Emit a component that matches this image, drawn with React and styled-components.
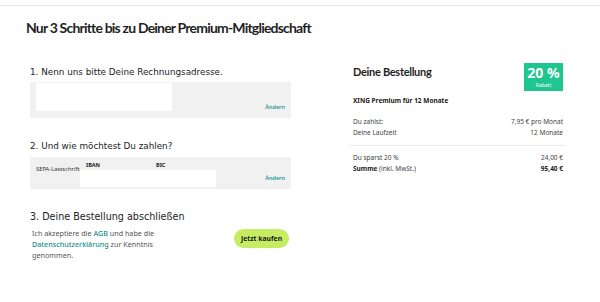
import React from 'react'
import styled, { createGlobalStyle } from 'styled-components'

const GlobalStyle = createGlobalStyle`
  body{
    margin:0;
    background:#fff;
    font-family:"Noto Sans","Open Sans",sans-serif;
    color:#2c2c2c;
  }
`

const TopBar = styled.div`
  height:5px;
  border-bottom:1px solid #e6e8ec;
`

const Page = styled.div`
  padding:13px 26px 0;
`

const Title = styled.h1`
  margin:0;
  font-family:Lato,sans-serif;
  font-size:14px;
  font-weight:700;
  letter-spacing:-0.8px;
  line-height:18px;
  color:#1f1f24;
`

const Columns = styled.div`
  display:grid;
  grid-template-columns:261px 216px;
  column-gap:59px;
  padding-left:4px;
  margin-top:28px;
`

const Left = styled.div`
  display:flex;
  flex-direction:column;
`

const StepTitle = styled.h2`
  margin:${p => p.$top || 0}px 0 0;
  font-family:"DejaVu Sans",sans-serif;
  font-size:${p => p.$size || 8.8}px;
  font-weight:400;
  line-height:14px;
  color:#222;
`

const GrayBox = styled.div`
  background:#f1f1f1;
  margin-top:${p => p.$top || 0}px;
  height:${p => p.$h}px;
  display:flex;
  position:relative;
`

const WhiteField = styled.div`
  background:#fff;
  width:136px;
  height:${p => p.$h}px;
`

const EditLink = styled.a`
  font-size:5.5px;
  color:#1a9a94;
  font-weight:600;
  position:absolute;
  right:6px;
  bottom:${p => p.$bottom}px;
`

const SepaLabel = styled.span`
  font-size:5.8px;
  color:#333;
  width:44px;
  padding:8px 0 0 6px;
`

const FieldGroup = styled.div`
  display:flex;
  flex-direction:column;
  align-self:flex-end;
`

const FieldLabels = styled.div`
  display:grid;
  grid-template-columns:70px 66px;
  padding-left:6px;
  font-size:5.5px;
  font-weight:700;
  color:#222;
  line-height:8px;
  margin-bottom:1px;
`

const Consent = styled.div`
  display:flex;
  justify-content:space-between;
  align-items:flex-start;
  margin-top:4px;
`

const ConsentText = styled.p`
  margin:0;
  padding-left:2px;
  font-size:7.2px;
  line-height:11px;
  color:#555;
  width:134px;
`

const TextLink = styled.a`
  color:#1a8f8a;
  text-decoration:none;
  font-weight:500;
`

const BuyButton = styled.button`
  margin-top:1px;
  margin-right:2px;
  width:55px;
  height:19px;
  border:none;
  border-radius:10px;
  background:#c6ec64;
  font-family:"Noto Sans",sans-serif;
  font-size:6.8px;
  font-weight:700;
  color:#1b1b1b;
`

const Right = styled.div`
  display:flex;
  flex-direction:column;
`

const OrderHead = styled.div`
  display:flex;
  justify-content:space-between;
  align-items:flex-start;
  padding:0 3px;
`

const OrderTitle = styled.h3`
  margin:0;
  font-family:Lato,sans-serif;
  font-size:11px;
  letter-spacing:-0.3px;
  font-weight:700;
  color:#1f1f24;
  line-height:13px;
`

const Badge = styled.div`
  width:39px;
  height:28px;
  margin-top:-2px;
  background:#1fc690;
  color:#fff;
  display:flex;
  flex-direction:column;
  align-items:center;
  justify-content:center;
`

const BadgeValue = styled.span`
  font-size:14px;
  font-weight:700;
  line-height:16px;
`

const BadgeLabel = styled.span`
  font-size:5px;
  line-height:8px;
`

const Product = styled.div`
  padding:0 3px;
  margin-top:5px;
  font-size:6.5px;
  font-weight:700;
  color:#222;
`

const Rows = styled.div`
  padding:${p => p.$pad};
  border-top:${p => (p.$line ? '1px solid #ececec' : 'none')};
  margin-top:${p => p.$top}px;
`

const Row = styled.div`
  display:flex;
  justify-content:space-between;
  padding:0 3px;
  font-size:6.5px;
  line-height:11px;
  color:#444;

  b{ color:#222; }
`

const App = () => {
  return (
    <>
      <GlobalStyle />
      <TopBar />
      <Page>
        <Title>Nur 3 Schritte bis zu Deiner Premium-Mitgliedschaft</Title>
        <Columns>
          <Left>
            <StepTitle>1. Nenn uns bitte Deine Rechnungsadresse.</StepTitle>
            <GrayBox $top={3} $h={36}>
              <div style={{ padding: '1px 0 0 6px' }}>
                <WhiteField $h={28} />
              </div>
              <EditLink $bottom={7}>Ändern</EditLink>
            </GrayBox>
            <StepTitle $top={21}>2. Und wie möchtest Du zahlen?</StepTitle>
            <GrayBox $top={4} $h={32}>
              <SepaLabel>SEPA-Lastschrift</SepaLabel>
              <FieldGroup>
                <FieldLabels>
                  <span>IBAN</span>
                  <span>BIC</span>
                </FieldLabels>
                <WhiteField $h={17} style={{ marginBottom: 2 }} />
              </FieldGroup>
              <EditLink $bottom={7}>Ändern</EditLink>
            </GrayBox>
            <StepTitle $top={21} $size={9.6}>3. Deine Bestellung abschließen</StepTitle>
            <Consent>
              <ConsentText>
                Ich akzeptiere die <TextLink>AGB</TextLink> und habe die <TextLink>Datenschutzerklärung</TextLink> zur Kenntnis genommen.
              </ConsentText>
              <BuyButton>Jetzt kaufen</BuyButton>
            </Consent>
          </Left>
          <Right>
            <OrderHead>
              <OrderTitle>Deine Bestellung</OrderTitle>
              <Badge>
                <BadgeValue>20 %</BadgeValue>
                <BadgeLabel>Rabatt</BadgeLabel>
              </Badge>
            </OrderHead>
            <Product>XING Premium für 12 Monate</Product>
            <Rows $top={11} $pad="0 0 7px">
              <Row><span>Du zahlst:</span><span>7,95 € pro Monat</span></Row>
              <Row><span>Deine Laufzeit</span><span>12 Monate</span></Row>
            </Rows>
            <Rows $top={0} $pad="6px 0 0" $line>
              <Row><span>Du sparst 20 %</span><span>24,00 €</span></Row>
              <Row><span><b>Summe</b> (inkl. MwSt.)</span><b>95,40 €</b></Row>
            </Rows>
          </Right>
        </Columns>
      </Page>
    </>
  )
}

export default App
